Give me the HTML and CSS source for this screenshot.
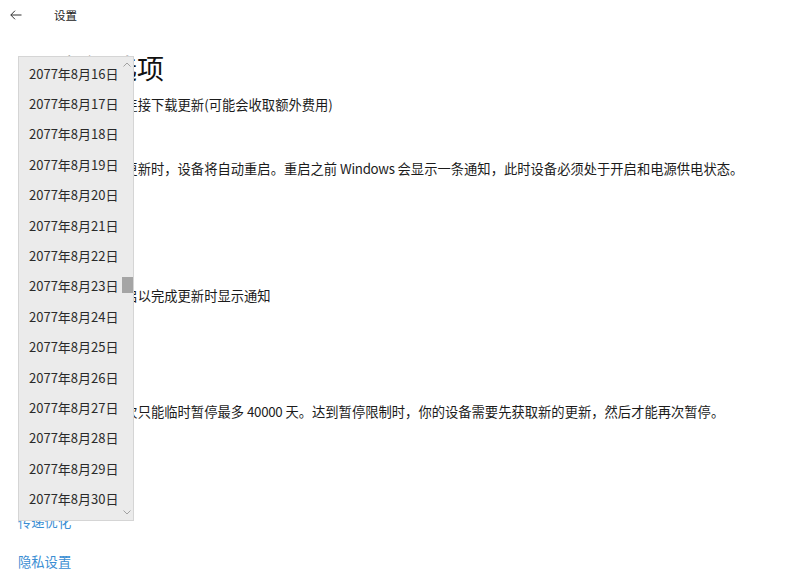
FILE: index.html
```html
<!DOCTYPE html>
<html lang="zh-CN">
<head>
<meta charset="utf-8">
<title>设置</title>
<link rel="stylesheet" href="styles.css">
</head>
<body>
<div class="page">
  <header class="titlebar">
    <span class="back">
      <svg width="12" height="10" viewBox="0 0 12 10"><path d="M5 0.7 L0.8 5 L5 9.3 M0.8 5 H11.5" fill="none" stroke="#333" stroke-width="1"/></svg>
    </span>
    <span class="apptitle">设置</span>
  </header>
  <main class="content">
    <h1 class="heading">高级选项</h1>
    <p class="txt t1">通过按流量计费的连接下载更新(可能会收取额外费用)</p>
    <div class="toggle"><span class="knob"></span></div>
    <p class="txt t2">需要重启才能安装更新时，设备将自动重启。重启之前 <span class="lat">Windows</span> 会显示一条通知，此时设备必须处于开启和电源供电状态。</p>
    <div class="toggle"><span class="knob"></span></div>
    <p class="txt t3">当你的设备需要重启以完成更新时显示通知</p>
    <div class="toggle"><span class="knob"></span></div>
    <p class="txt t4">此设备上的更新每次只能临时暂停最多 <span class="lat">40000</span> 天。达到暂停限制时，你的设备需要先获取新的更新，然后才能再次暂停。</p>
    <a class="link l1" href="#">传递优化</a>
    <a class="link l2" href="#">隐私设置</a>
  </main>
  <div class="popup">
    <div class="list">
      <div class="item">2077年8月16日</div>
      <div class="item">2077年8月17日</div>
      <div class="item">2077年8月18日</div>
      <div class="item">2077年8月19日</div>
      <div class="item">2077年8月20日</div>
      <div class="item">2077年8月21日</div>
      <div class="item">2077年8月22日</div>
      <div class="item">2077年8月23日</div>
      <div class="item">2077年8月24日</div>
      <div class="item">2077年8月25日</div>
      <div class="item">2077年8月26日</div>
      <div class="item">2077年8月27日</div>
      <div class="item">2077年8月28日</div>
      <div class="item">2077年8月29日</div>
      <div class="item">2077年8月30日</div>
    </div>
    <div class="scroll">
      <svg class="chev" width="8" height="5" viewBox="0 0 8 5"><path d="M0.5 4.5 L4 1 L7.5 4.5" fill="none" stroke="#9a9a9a" stroke-width="0.9"/></svg>
      <div class="track"><div class="thumb"></div></div>
      <svg class="chev" width="8" height="5" viewBox="0 0 8 5"><path d="M0.5 0.5 L4 4 L7.5 0.5" fill="none" stroke="#9a9a9a" stroke-width="0.9"/></svg>
    </div>
  </div>
</div>
</body>
</html>
```

FILE: styles.css
```css
html, body {
  margin: 0;
  padding: 0;
  background: #ffffff;
}
body {
  font-family: "Noto Sans CJK SC", "Noto Sans", sans-serif;
  color: #1b1b1b;
}
.page {
  position: relative;
  width: 800px;
  height: 586px;
  overflow: hidden;
}
.titlebar {
  display: flex;
  align-items: center;
  height: 30px;
  padding-left: 10px;
}
.back {
  display: flex;
  width: 44px;
}
.apptitle {
  font-size: 11.5px;
  color: #222;
}
.content {
  display: flex;
  flex-direction: column;
  align-items: flex-start;
  padding-left: 18px;
}
.heading {
  margin: 20px 0 0 38px;
  font-size: 27px;
  line-height: 36px;
  font-weight: normal;
  color: #111;
  letter-spacing: 0;
}
.txt {
  margin: 0;
  font-size: 13.3px;
  line-height: 20px;
  color: #1b1b1b;
  white-space: nowrap;
}
.lat {
  letter-spacing: -0.3px;
}
.t1 { margin-top: 9px; }
.t2 { margin-top: 16px; }
.t3 { margin-top: 79px; }
.t4 { margin-top: 68px; }
.toggle {
  margin-top: 10px;
  width: 40px;
  height: 18px;
  border: 2px solid #333;
  border-radius: 11px;
  box-sizing: border-box;
  display: flex;
  align-items: center;
  padding-left: 3px;
}
.knob {
  width: 10px;
  height: 10px;
  border-radius: 50%;
  background: #333;
}
.link {
  font-size: 13.3px;
  line-height: 20px;
  color: #3a8ed3;
  text-decoration: none;
}
.l1 { margin-top: 90px; }
.l2 { margin-top: 20px; }

.popup {
  position: absolute;
  left: 18px;
  top: 56px;
  width: 116px;
  height: 465px;
  box-sizing: border-box;
  background: #ebebeb;
  border: 1px solid #d5d5d5;
  display: flex;
}
.list {
  flex: 1;
  padding-top: 1px;
}
.item {
  height: 30.4px;
  display: flex;
  align-items: center;
  padding-left: 10px;
  font-size: 13px;
  color: #2a2a2a;
  white-space: nowrap;
}
.scroll {
  width: 12px;
  display: flex;
  flex-direction: column;
  align-items: center;
  padding-top: 5px;
  padding-bottom: 5px;
}
.chev {
  display: block;
}
.track {
  flex: 1;
  width: 100%;
  display: flex;
  flex-direction: column;
  padding-top: 210px;
}
.thumb {
  width: 11px;
  height: 16px;
  margin-left: 1px;
  background: #a5a5a5;
}
```
